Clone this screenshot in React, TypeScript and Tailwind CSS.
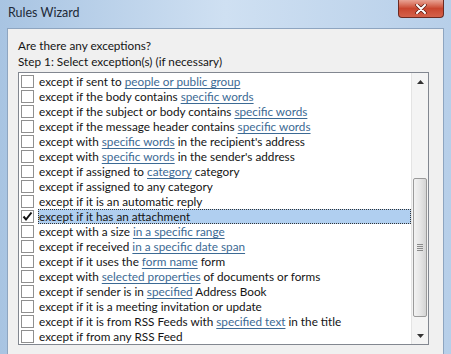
import React from 'react';

type Part = { t: string; link?: boolean };

const rows: Part[][] = [
  [{ t: 'except if sent to ' }, { t: 'people or public group', link: true }],
  [{ t: 'except if the body contains ' }, { t: 'specific words', link: true }],
  [{ t: 'except if the subject or body contains ' }, { t: 'specific words', link: true }],
  [{ t: 'except if the message header contains ' }, { t: 'specific words', link: true }],
  [{ t: 'except with ' }, { t: 'specific words', link: true }, { t: " in the recipient's address" }],
  [{ t: 'except with ' }, { t: 'specific words', link: true }, { t: " in the sender's address" }],
  [{ t: 'except if assigned to ' }, { t: 'category', link: true }, { t: ' category' }],
  [{ t: 'except if assigned to any category' }],
  [{ t: 'except if it is an automatic reply' }],
  [{ t: 'except if it has an attachment' }],
  [{ t: 'except with a size ' }, { t: 'in a specific range', link: true }],
  [{ t: 'except if received ' }, { t: 'in a specific date span', link: true }],
  [{ t: 'except if it uses the ' }, { t: 'form name', link: true }, { t: ' form' }],
  [{ t: 'except with ' }, { t: 'selected properties', link: true }, { t: ' of documents or forms' }],
  [{ t: 'except if sender is in ' }, { t: 'specified', link: true }, { t: ' Address Book' }],
  [{ t: 'except if it is a meeting invitation or update' }],
  [{ t: 'except if it is from RSS Feeds with ' }, { t: 'specified text', link: true }, { t: ' in the title' }],
  [{ t: 'except if from any RSS Feed' }],
];

const SELECTED = 9;

const Checkbox = ({ checked }: { checked: boolean }) => (
  <div className="w-[13px] h-[13px] border border-[#8f8f8f] bg-white flex items-center justify-center shrink-0">
    {checked && (
      <svg width="11" height="11" viewBox="0 0 11 11">
        <path d="M1.5 5.5 L4 8.5 L9.5 1.5" fill="none" stroke="#111" strokeWidth="2" />
      </svg>
    )}
  </div>
);

export default function App() {
  return (
    <div
      className="w-[451px] h-[354px] overflow-hidden flex flex-col bg-gradient-to-r from-[#a8c4e2] via-[#cfe0f2] to-[#b7cfe9] text-[#141414]"
      style={{ fontFamily: 'Lato, "Open Sans", sans-serif' }}
    >
      {/* title bar */}
      <div className="h-[28px] shrink-0 flex items-start justify-between pl-[8px] pr-[7px]">
        <div className="text-[12.5px] mt-[4px] text-[#1e2a38]">Rules Wizard</div>
        <div className="w-[46px] h-[18px] rounded-b-[4px] border border-t-0 border-[#6b2a22] bg-gradient-to-b from-[#e8a394] via-[#c9462f] to-[#d4614a] flex items-center justify-center">
          <svg width="12" height="10" viewBox="0 0 12 10">
            <path d="M2 1 L10 9 M10 1 L2 9" stroke="#5a1a12" strokeWidth="3.4" strokeLinecap="round" />
            <path d="M2 1 L10 9 M10 1 L2 9" stroke="#ffffff" strokeWidth="2" strokeLinecap="round" />
          </svg>
        </div>
      </div>

      <div className="flex flex-1 px-[7px]">
        <div className="flex-1 bg-[#f0f0f0] border-t border-x border-[#8ea5c0] pl-[10px] pr-[14px] pt-[9px]">
          <div className="text-[11.75px] leading-[16px]">Are there any exceptions?</div>
          <div className="text-[11.75px] leading-[16px]">Step 1: Select exception(s) (if necessary)</div>

          <div className="mt-[2px] h-[273px] border border-[#828790] bg-white flex">
            <div className="flex-1 pt-[1px]">
              {rows.map((parts, i) => (
                <div key={i} className="h-[15px] flex items-center pl-[2px]">
                  <Checkbox checked={i === SELECTED} />
                  <div
                    className={`ml-[4px] pl-[1px] h-[15px] flex-1 flex items-center text-[11.75px] whitespace-nowrap ${
                      i === SELECTED ? 'bg-[#b0cff0] outline outline-1 outline-dotted outline-[#333] -outline-offset-1' : ''
                    }`}
                  >
                    {parts.map((p, j) =>
                      p.link ? (
                        <span key={j} className="text-[#3c6a94] underline underline-offset-[2px] decoration-[#3c6a94]">
                          {p.t}
                        </span>
                      ) : (
                        <span key={j} className="whitespace-pre">{p.t}</span>
                      )
                    )}
                  </div>
                </div>
              ))}
            </div>

            {/* scrollbar */}
            <div className="w-[17px] shrink-0 bg-[#f4f4f4] border-l border-[#e4e4e4] flex flex-col items-center">
              <div className="h-[17px] flex items-center justify-center">
                <svg width="7" height="4" viewBox="0 0 7 4">
                  <path d="M0 4 L3.5 0 L7 4 Z" fill="#333" />
                </svg>
              </div>
              <div className="h-[88px]" />
              <div className="w-[14px] h-[139px] rounded-[2px] border border-[#9a9a9a] bg-gradient-to-r from-[#f2f2f2] via-[#e6e6e6] to-[#d4d4d4] flex items-center justify-center">
                <div className="flex flex-col gap-[1px]">
                  <div className="w-[6px] h-[1px] bg-[#8a8a8a]" />
                  <div className="w-[6px] h-[1px] bg-[#8a8a8a]" />
                  <div className="w-[6px] h-[1px] bg-[#8a8a8a]" />
                  <div className="w-[6px] h-[1px] bg-[#8a8a8a]" />
                </div>
              </div>
              <div className="flex-1 flex items-end pb-[6px]">
                <svg width="7" height="4" viewBox="0 0 7 4">
                  <path d="M0 0 L7 0 L3.5 4 Z" fill="#333" />
                </svg>
              </div>
            </div>
          </div>
        </div>
      </div>
    </div>
  );
}
